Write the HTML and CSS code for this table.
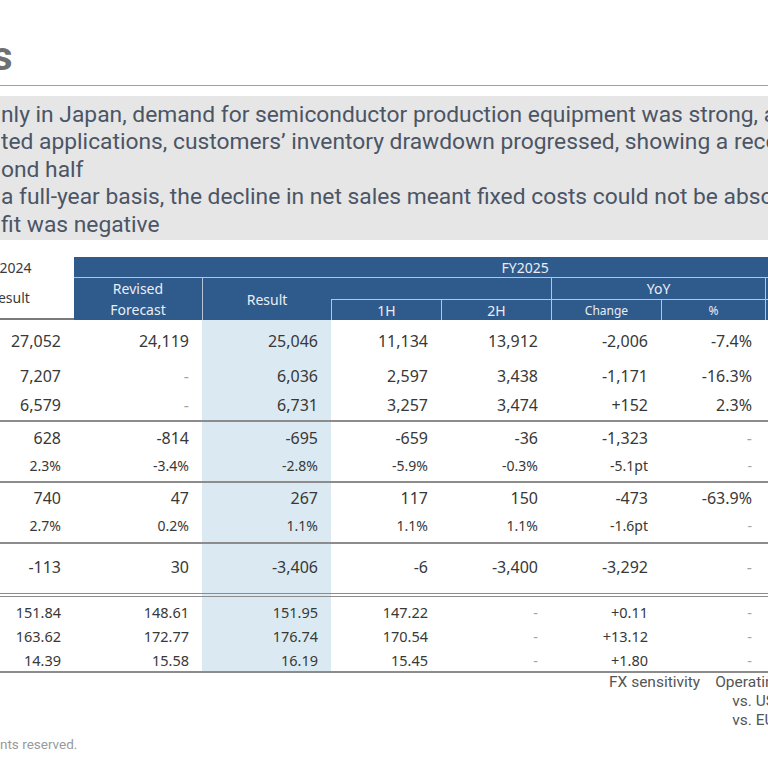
FILE: index.html
```html
<!DOCTYPE html>
<html>
    <head>
        <title>FY2025 results</title>
        <link rel="stylesheet" href="styles.css">
    </head>

    <body>
        <div class="slide">
            <h1 class="title">s</h1>
            <div class="summary">
                <p>nly in Japan, demand for semiconductor production equipment was strong, and</p>
                <p>ted applications, customers’ inventory drawdown progressed, showing a recovery</p>
                <p>ond half</p>
                <p>a full-year basis, the decline in net sales meant fixed costs could not be absorbed</p>
                <p>fit was negative</p>
            </div>

            <table class="results">
                <colgroup>
                    <col class="w129"><col class="w128"><col class="w129">
                    <col class="w110"><col class="w110"><col class="w110">
                    <col class="w104"><col class="w105"><col class="w106">
                </colgroup>
                <thead>
                    <tr class="hA">
                        <th class="side">FY2024</th>
                        <th colspan="8">FY2025</th>
                    </tr>
                    <tr class="hB">
                        <th class="side" rowspan="2">Result</th>
                        <th rowspan="2" class="two">Revised<br>Forecast</th>
                        <th rowspan="2" class="vl">Result</th>
                        <th colspan="2"></th>
                        <th colspan="2" class="vl">YoY</th>
                        <th colspan="2" class="vl">vs. Forecast</th>
                    </tr>
                    <tr class="hC">
                        <th class="vl">1H</th>
                        <th class="vl">2H</th>
                        <th class="vl sm">Change</th>
                        <th class="vl sm">%</th>
                        <th class="vl sm">Change</th>
                        <th class="vl sm">%</th>
                    </tr>
                </thead>
                <tbody>
                    <tr class="r1">
                        <td>27,052</td><td>24,119</td><td class="hl">25,046</td><td>11,134</td><td>13,912</td><td>-2,006</td><td>-7.4%</td><td>+927</td><td>3.8%</td>
                    </tr>
                    <tr class="r2">
                        <td>7,207</td><td class="na">-</td><td class="hl">6,036</td><td>2,597</td><td>3,438</td><td>-1,171</td><td>-16.3%</td><td class="na">-</td><td class="na">-</td>
                    </tr>
                    <tr class="r3">
                        <td>6,579</td><td class="na">-</td><td class="hl">6,731</td><td>3,257</td><td>3,474</td><td>+152</td><td>2.3%</td><td class="na">-</td><td class="na">-</td>
                    </tr>
                    <tr class="r4 sep">
                        <td>628</td><td>-814</td><td class="hl">-695</td><td>-659</td><td>-36</td><td>-1,323</td><td class="na">-</td><td>+119</td><td class="na">-</td>
                    </tr>
                    <tr class="r5 sm">
                        <td>2.3%</td><td>-3.4%</td><td class="hl">-2.8%</td><td>-5.9%</td><td>-0.3%</td><td>-5.1pt</td><td class="na">-</td><td>+0.6pt</td><td class="na">-</td>
                    </tr>
                    <tr class="r6 sep">
                        <td>740</td><td>47</td><td class="hl">267</td><td>117</td><td>150</td><td>-473</td><td>-63.9%</td><td>+220</td><td class="na">-</td>
                    </tr>
                    <tr class="r7 sm">
                        <td>2.7%</td><td>0.2%</td><td class="hl">1.1%</td><td>1.1%</td><td>1.1%</td><td>-1.6pt</td><td class="na">-</td><td>+0.9pt</td><td class="na">-</td>
                    </tr>
                    <tr class="r8 sep">
                        <td>-113</td><td>30</td><td class="hl">-3,406</td><td>-6</td><td>-3,400</td><td>-3,292</td><td class="na">-</td><td>-3,436</td><td class="na">-</td>
                    </tr>
                    <tr class="r9 fx dbl">
                        <td>151.84</td><td>148.61</td><td class="hl">151.95</td><td>147.22</td><td class="na">-</td><td>+0.11</td><td class="na">-</td><td>+3.34</td><td class="na">-</td>
                    </tr>
                    <tr class="r10 fx">
                        <td>163.62</td><td>172.77</td><td class="hl">176.74</td><td>170.54</td><td class="na">-</td><td>+13.12</td><td class="na">-</td><td>+3.97</td><td class="na">-</td>
                    </tr>
                    <tr class="r11 fx last">
                        <td>14.39</td><td>15.58</td><td class="hl">16.19</td><td>15.45</td><td class="na">-</td><td>+1.80</td><td class="na">-</td><td>+0.61</td><td class="na">-</td>
                    </tr>
                </tbody>
            </table>

            <div class="notes">
                <p>FX sensitivity</p>
                <div class="sens">
                    <p>Operating income</p>
                    <p class="ind">vs. USD</p>
                    <p class="ind">vs. EUR</p>
                </div>
            </div>

            <p class="copy">nts reserved.</p>
        </div>
    </body>
</html>
```

FILE: styles.css
```css
html,body{margin: 0;padding: 0;width: 768px;height: 768px;overflow: hidden;background: #fff;}
.slide{font-family: Roboto, "Liberation Sans", sans-serif;}
.title{margin: 0 0 0 -8px;padding: 33px 0 4px 0;font-size: 40px;line-height: 48px;font-weight: bold;color: #707070;border-bottom: 1px solid #8fa3c0;}
.summary{margin-top: 10px;background-color: #e6e6e6;padding: 5px 0 2px 1px;color: #4b5565;font-size: 22.8px;line-height: 27.4px;}
.summary>p{margin: 0;white-space: nowrap;overflow: hidden;}

.results{margin: 17px 0 0 -55px;border-collapse: separate;border-spacing: 0;table-layout: fixed;width: 1031px;font-family: "Noto Sans", "Open Sans", sans-serif;color: #383838;}
col.w129{width: 129px;} col.w128{width: 128px;} col.w110{width: 110px;}
col.w104{width: 104px;} col.w105{width: 105px;} col.w106{width: 106px;}
.results th{background-color: #2f5a8c;color: #e9eef5;font-size: 14px;font-weight: normal;padding: 0;text-align: center;line-height: 19px;}
.results th.side{background-color: #fff;color: #3a3a3a;}
.hA th{height: 20px;}
.hA th.side{padding-right: 3px;}
.hB th{height: 21px;border-top: 1px solid #b7c5d8;}
.hC th{height: 20px;border-top: 1px solid #b7c5d8;}
.results th.side{border-top: none;}
.hB th.side{border-bottom: 2px solid #7a7a7a;}
.results th.vl{border-left: 1px solid #b7c5d8;}
.results th.two{line-height: 21px;}
.results th.sm{font-size: 12px;}

.results td{padding: 0 13px 0 0;text-align: right;font-size: 16px;vertical-align: middle;white-space: nowrap;}
.results td.hl{background-color: #dbeaf2;}
.results td.na{color: #a3a3a3;}
.results tr.sm td{font-size: 14px;}
.results tr.fx td{font-size: 14.5px;}
.results tr.sep td{border-top: 2px solid #8c8c8c;}
.results tr.dbl td{border-top: 4px double #8c8c8c;}
.results tr.last td{border-bottom: 2px solid #8c8c8c;}
tr.r1 td{height: 42px;}
tr.r2 td{height: 28px;}
tr.r3 td{height: 30px;}
tr.r4 td{height: 32px;}
tr.r5 td{height: 22px;padding-bottom: 5px;}
tr.r6 td{height: 30px;}
tr.r7 td{height: 24px;padding-bottom: 5px;}
tr.r8 td{height: 46px;padding-bottom: 3px;}
tr.r9 td{height: 24px;padding-top: 3px;}
tr.r10 td{height: 24px;}
tr.r11 td{height: 23px;}

.notes{display: flex;gap: 15px;margin: 0 0 0 609px;color: #555;font-size: 15.5px;line-height: 19px;white-space: nowrap;}
.notes p{margin: 0;}
.notes .ind{padding-left: 17px;}
.copy{margin: 6px 0 0;font-size: 13.5px;line-height: 16px;color: #9a9a9a;}
```
